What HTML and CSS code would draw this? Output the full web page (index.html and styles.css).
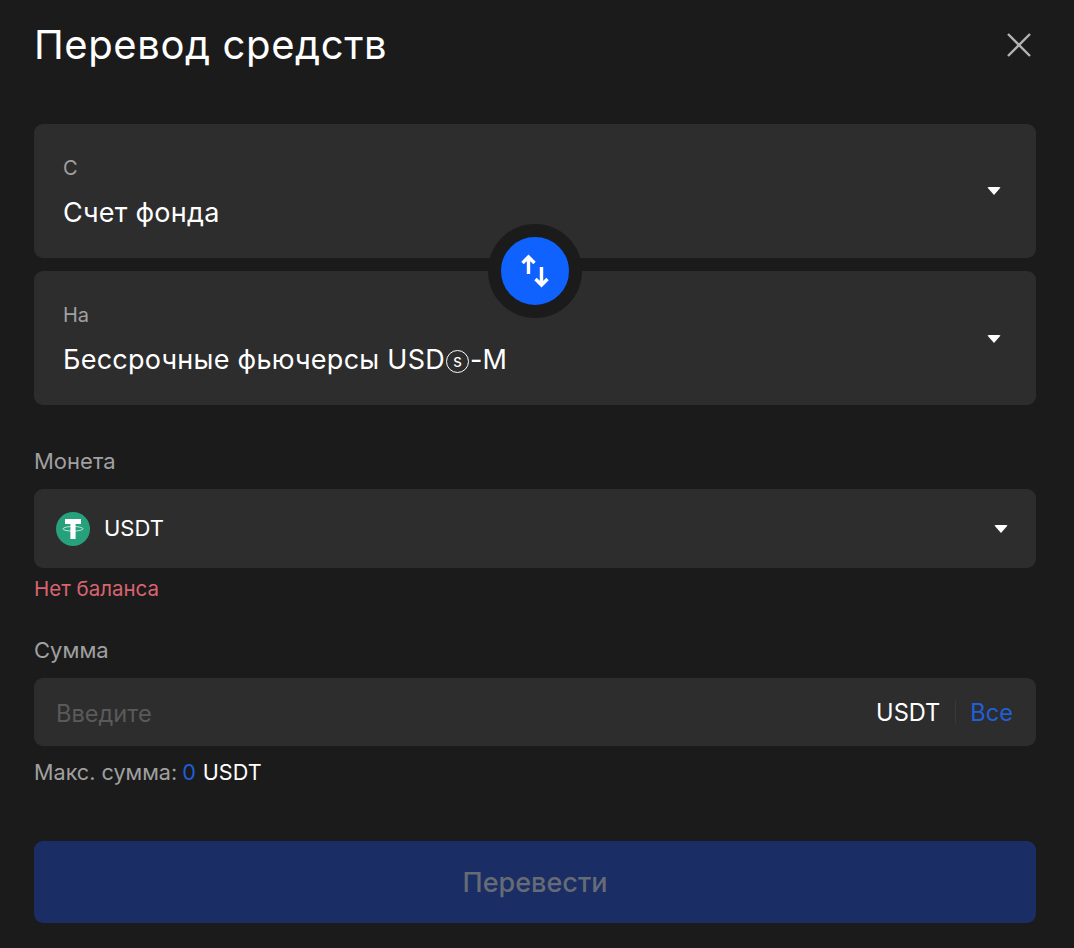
FILE: index.html
```html
<!DOCTYPE html>
<html lang="ru">
<head>
  <meta charset="UTF-8" />
  <title>Перевод средств</title>
  <link rel="stylesheet" href="styles.css">
</head>
<body>
  <header class="head">
    <h1>Перевод средств</h1>
    <button class="close" aria-label="Закрыть">
      <svg width="26" height="26" viewBox="0 0 26 26"><path d="M2 2 L24 24 M24 2 L2 24" stroke="#b3b3b3" stroke-width="2.4" fill="none"/></svg>
    </button>
  </header>

  <div class="accounts">
    <div class="account">
      <div class="account-text">
        <div class="account-label">С</div>
        <div class="account-name">Счет фонда</div>
      </div>
      <span class="caret"></span>
    </div>
    <div class="account">
      <div class="account-text">
        <div class="account-label">На</div>
        <div class="account-name">Бессрочные фьючерсы USD<span class="circled">s</span>-M</div>
      </div>
      <span class="caret"></span>
    </div>
    <button class="swap" aria-label="Поменять">
      <svg width="28" height="34" viewBox="0 0 28 34">
        <path d="M7.5 20 V2.5 M1.5 9 L7.5 3 L13.5 9" stroke="#fff" stroke-width="3.4" fill="none"/>
        <path d="M20.5 13 V31 M14.5 25 L20.5 31 L26.5 25" stroke="#fff" stroke-width="3.4" fill="none"/>
      </svg>
    </button>
  </div>

  <div class="field-label coin-label">Монета</div>
  <div class="coin-select">
    <svg class="coin-icon" width="34" height="34" viewBox="0 0 34 34">
      <circle cx="17" cy="17" r="17" fill="#26a17b"/>
      <path d="M9 7 H25 V12 H19.6 V27 H14.4 V12 H9 Z" fill="#fff"/>
      <ellipse cx="17" cy="16.8" rx="10" ry="2.3" fill="none" stroke="#fff" stroke-opacity=".7" stroke-width="1"/>
    </svg>
    <span class="coin-name">USDT</span>
    <span class="caret caret-coin"></span>
  </div>
  <div class="error">Нет баланса</div>

  <div class="field-label amount-label">Сумма</div>
  <div class="amount">
    <span class="placeholder">Введите</span>
    <span class="amount-right">
      <span class="unit">USDT</span>
      <span class="divider"></span>
      <a class="all">Все</a>
    </span>
  </div>
  <div class="max">Макс. сумма:<span class="max-val">0</span><span class="max-unit">USDT</span></div>

  <button class="submit" disabled>Перевести</button>
</body>
</html>
```

FILE: styles.css
```css
* {
  margin: 0;
  padding: 0;
  box-sizing: border-box;
}

html, body {
  height: 100%;
  overflow: hidden;
}

body {
  background: #1b1b1b;
  color: #fff;
  font-family: Inter, "Liberation Sans", sans-serif;
  padding: 0 38px 0 34px;
}

button {
  font-family: inherit;
  border: none;
  background: none;
  color: inherit;
}

.head {
  display: flex;
  justify-content: space-between;
  align-items: center;
  height: 90px;
}

h1 {
  font-size: 40px;
  line-height: 46px;
  font-weight: 400;
  letter-spacing: 0.6px;
}

.close {
  display: flex;
  margin-right: 4px;
}

.accounts {
  position: relative;
  margin-top: 34px;
  display: flex;
  flex-direction: column;
  gap: 13px;
}

.account {
  height: 134px;
  background: #2d2d2d;
  border-radius: 9px;
  padding: 0 35px 0 29px;
  display: flex;
  align-items: center;
  justify-content: space-between;
}

.account + .account .caret {
  margin-top: 2px;
}

.account-text {
  padding-top: 2px;
}

.account-label {
  font-size: 20px;
  line-height: 24px;
  color: #a0a0a0;
}

.account-name {
  font-size: 27px;
  line-height: 32px;
  margin-top: 17px;
  letter-spacing: 0.25px;
}

.circled {
  display: inline-block;
  width: 23px;
  height: 23px;
  line-height: 20px;
  border: 1.2px solid #fff;
  border-radius: 50%;
  font-size: 17px;
  letter-spacing: 0;
  text-align: center;
  vertical-align: 2px;
  margin: 0 1px;
}

.caret {
  width: 0;
  height: 0;
  border-left: 7px solid transparent;
  border-right: 7px solid transparent;
  border-top: 8px solid #fff;
  border-radius: 2px;
}

.swap {
  position: absolute;
  left: 454px;
  top: 100px;
  width: 94px;
  height: 94px;
  border-radius: 50%;
  background: #0f62fe;
  border: 13px solid #1b1b1b;
  display: flex;
  align-items: center;
  justify-content: center;
}

.field-label {
  font-size: 22px;
  line-height: 28px;
  color: #a0a0a0;
}

.coin-label {
  margin-top: 42px;
}

.coin-select {
  margin-top: 14px;
  height: 79px;
  background: #2d2d2d;
  border-radius: 9px;
  padding: 0 28px 0 22px;
  display: flex;
  align-items: center;
}

.coin-name {
  font-size: 22px;
  margin-left: 14px;
  margin-bottom: 2px;
  flex: 1;
}

.error {
  margin-top: 9px;
  font-size: 20.5px;
  line-height: 24px;
  color: #d9646f;
}

.amount-label {
  margin-top: 35px;
}

.amount {
  margin-top: 14px;
  height: 68px;
  background: #2d2d2d;
  border-radius: 9px;
  padding: 0 23px 0 22px;
  display: flex;
  align-items: center;
  justify-content: space-between;
  font-size: 23.6px;
}

.placeholder {
  color: #5a5a5a;
  margin-top: 2px;
}

.amount-right {
  display: flex;
  align-items: center;
}

.unit {
  font-size: 23.6px;
}

.divider {
  width: 1px;
  height: 22px;
  background: #3a3a3a;
  margin: 0 14px 0 15px;
}

.all {
  color: #1f5fd8;
}

.max {
  margin-top: 13px;
  font-size: 21.6px;
  line-height: 26px;
  color: #a0a0a0;
}

.max-val {
  color: #1f5fd8;
  margin: 0 7px 0 5px;
}

.max-unit {
  color: #fff;
}

.submit {
  display: block;
  width: 100%;
  height: 82px;
  margin-top: 56px;
  border-radius: 9px;
  background: #1a2d64;
  color: #666b76;
  font-size: 27px;
  font-weight: 500;
}
```
